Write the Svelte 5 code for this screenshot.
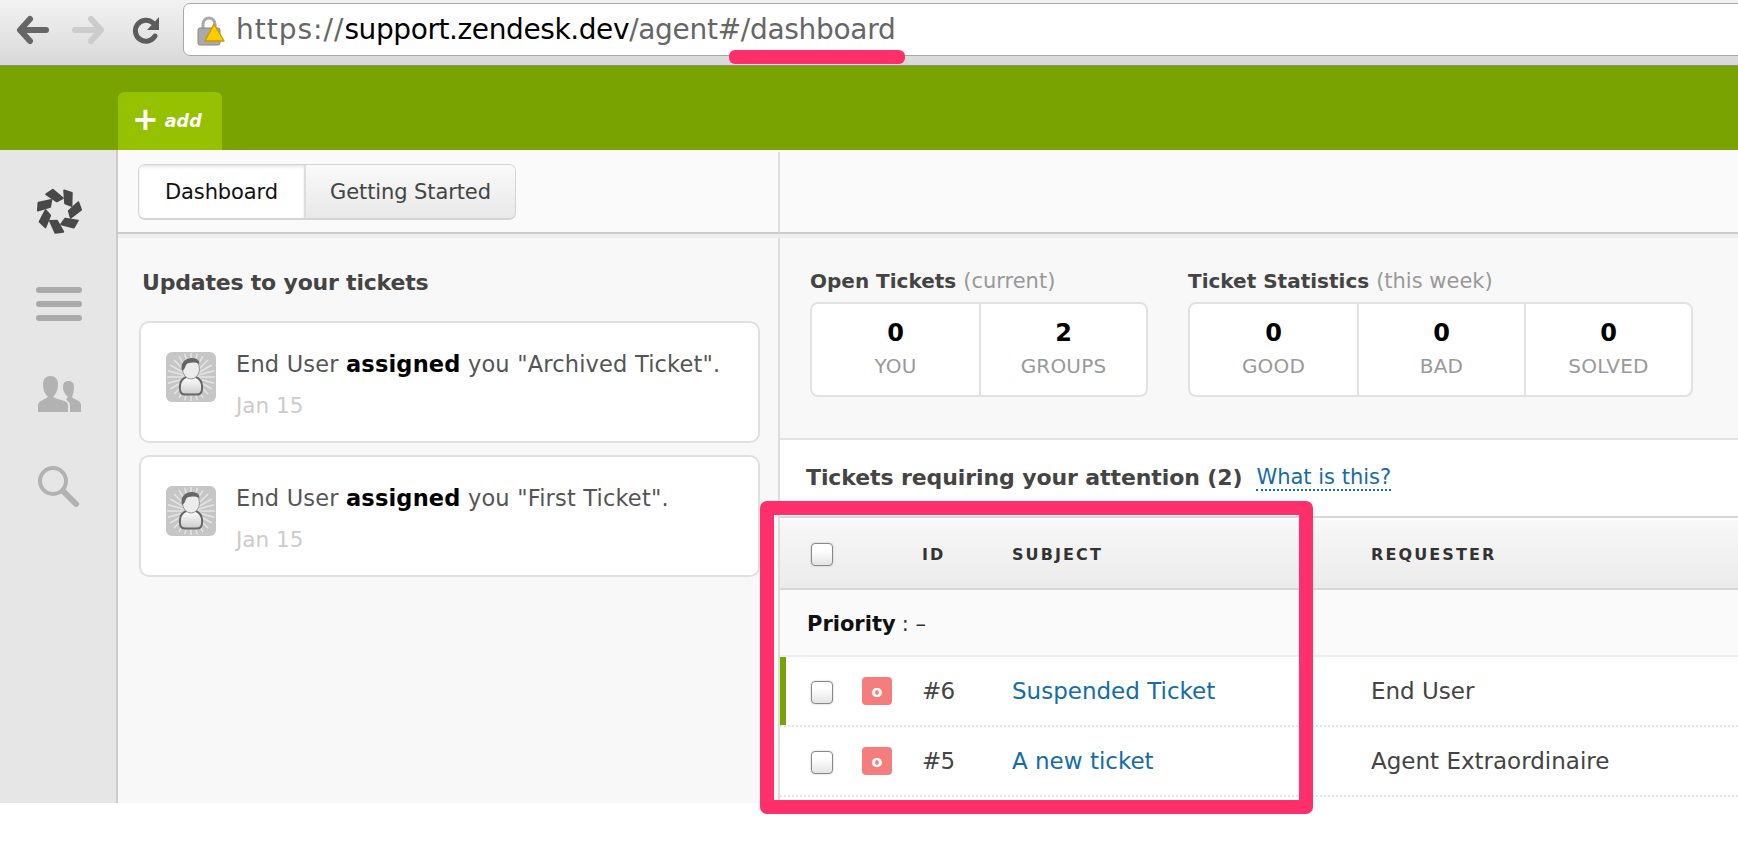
<script lang="ts">
  const updates = [
    { title: '"Archived Ticket".', date: 'Jan 15' },
    { title: '"First Ticket".', date: 'Jan 15' },
  ];
  const openStats = [
    { value: 0, label: 'YOU' },
    { value: 2, label: 'GROUPS' },
  ];
  const weekStats = [
    { value: 0, label: 'GOOD' },
    { value: 0, label: 'BAD' },
    { value: 0, label: 'SOLVED' },
  ];
  const tickets = [
    { id: '#6', subject: 'Suspended Ticket', requester: 'End User', current: true },
    { id: '#5', subject: 'A new ticket', requester: 'Agent Extraordinaire', current: false },
  ];
  const petals = [0, 1, 2, 3, 4, 5, 6];
  const rays = Array.from({ length: 24 }, (_, i) => (i * 360) / 24);
</script>

<div class="page">
  <header class="chrome">
    <svg class="nav" width="34" height="30" viewBox="0 0 34 30" aria-label="Back">
      <path d="M14 4 L4 15 L14 26 M5 15 H30" fill="none" stroke="#666" stroke-width="6" stroke-linecap="round" stroke-linejoin="round" />
    </svg>
    <svg class="nav forward" width="34" height="30" viewBox="0 0 34 30" aria-label="Forward">
      <path d="M20 4 L30 15 L20 26 M29 15 H4" fill="none" stroke="#ccc" stroke-width="6" stroke-linecap="round" stroke-linejoin="round" />
    </svg>
    <svg class="nav reload" width="30" height="30" viewBox="0 0 30 30" aria-label="Reload">
      <path d="M22 8 A10.5 10.5 0 1 0 24 21" fill="none" stroke="#5c5c5c" stroke-width="5" stroke-linecap="round" />
      <path d="M28 2 V15 H16 Z" fill="#5c5c5c" />
    </svg>
    <div class="address">
      <svg class="lock" width="30" height="32" viewBox="0 0 30 32">
        <path d="M6 14 V9 A6 6 0 0 1 18 9 V14" fill="none" stroke="#aaa" stroke-width="3" />
        <rect x="1" y="13" width="22" height="17" rx="2" fill="#a9a9a9" stroke="#888" />
        <path d="M17 9 L27 26 H8 Z" fill="#fc0" stroke="#c89a00" stroke-width="1.4" stroke-linejoin="round" />
      </svg>
      <span class="url"><span class="dim scheme">https://</span><span class="host">support.zendesk.dev</span><span class="dim path">/agent#/dashboard</span></span>
    </div>
  </header>

  <div class="greenbar">
    <div class="add-tab"><span class="plus">+</span> <em>add</em></div>
  </div>

  <div class="workspace">
    <aside class="rail">
      <svg width="46" height="46" viewBox="-20.5 -20.5 41 41" aria-label="Home">
        {#each petals as i}
          <path
            transform={`rotate(${(i * 360) / 7})`}
            d="M-11.5 -15 L-5.5 -19 L3.5 -11.5 L-2 -8.5 Z"
            fill="#484848"
            stroke="#484848"
            stroke-width="1.6"
            stroke-linejoin="round"
          />
        {/each}
      </svg>
      <svg width="46" height="46" viewBox="0 0 46 46" aria-label="Views">
        <rect y="7" width="46" height="6" rx="3" fill="#aaa" />
        <rect y="21" width="46" height="6" rx="3" fill="#aaa" />
        <rect y="35" width="46" height="6" rx="3" fill="#aaa" />
      </svg>
      <svg width="46" height="46" viewBox="0 0 46 46" aria-label="Customers">
        <path d="M2 40 V33 C2 29 8 28 12 25 C9 22 7 18 7 12 C7 7 10 4 14.5 4 C19 4 22 7 22 12 C22 18 20 22 17 25 C21 28 32 28 32 33 V40 Z" fill="#b2b2b2" />
        <path d="M34 40 V33 C34 30 31 29 30 27 L32 25 C28 21 27 18 27 15 C27 11 29 9 32.5 9 C36 9 38 11 38 15 C38 19 37 22 36 25 C38 28 45 28 45 33 V40 Z" fill="#b2b2b2" />
      </svg>
      <svg width="46" height="46" viewBox="0 0 46 46" aria-label="Search">
        <circle cx="17" cy="17" r="13" fill="none" stroke="#b2b2b2" stroke-width="4" />
        <path d="M27 27 L40 40" stroke="#b2b2b2" stroke-width="6" stroke-linecap="round" />
      </svg>
    </aside>

    <main class="content">
      <div class="topbar">
        <div class="tabs-cell">
          <div class="tabs">
            <div class="tab active">Dashboard</div>
            <div class="tab">Getting Started</div>
          </div>
        </div>
        <div class="top-rest"></div>
      </div>

      <div class="columns">
        <section class="updates">
          <h2>Updates to your tickets</h2>
          {#each updates as u}
            <article class="card">
              <svg class="avatar" width="50" height="50" viewBox="0 0 50 50">
                <defs>
                  <linearGradient id="avatar-body" x1="0" y1="0" x2="0" y2="1">
                    <stop offset="0" stop-color="#fff" />
                    <stop offset="1" stop-color="#ccc" />
                  </linearGradient>
                </defs>
                <rect width="50" height="50" rx="6" fill="#c6c6c6" />
                {#each rays as r}
                  <path transform={`rotate(${r} 25 25)`} d="M25 25 V1" stroke="#e4e4e4" stroke-width="1.5" />
                {/each}
                <path d="M19 42.500 C14 42.500 13.500 38 14 33 C14.500 29 17 26.500 20 25 H30 C33 26.500 35.500 29 36 33 C36.500 38 36 42.500 31 42.500 Z" fill="url(#avatar-body)" stroke="#666" stroke-width="2" />
                <ellipse cx="25" cy="17" rx="8.500" ry="10" fill="#ececec" stroke="#999" />
                <path d="M16 19 C14 11 19 6 26 6 C31 6 34 9 33.500 12 C29 10 22 10 20 13 C19 16 18 18 16 19 Z" fill="#666" />
              </svg>
              <div class="card-text">
                <p>End User <strong>assigned</strong> you {u.title}</p>
                <time>{u.date}</time>
              </div>
            </article>
          {/each}
        </section>

        <section class="main-col">
          <div class="stats">
            <div class="stat-group">
              <h3>Open Tickets <small>(current)</small></h3>
              <div class="stat-box">
                {#each openStats as s}
                  <div class="stat"><b>{s.value}</b><span>{s.label}</span></div>
                {/each}
              </div>
            </div>
            <div class="stat-group">
              <h3>Ticket Statistics <small>(this week)</small></h3>
              <div class="stat-box">
                {#each weekStats as s}
                  <div class="stat"><b>{s.value}</b><span>{s.label}</span></div>
                {/each}
              </div>
            </div>
          </div>

          <div class="tickets-head">
            <h2>Tickets requiring your attention (2)</h2>
            <span class="what">What is this?</span>
          </div>

          <div class="table">
            <div class="row head">
              <span class="check"></span>
              <span></span>
              <span>ID</span>
              <span>SUBJECT</span>
              <span>REQUESTER</span>
            </div>
            <div class="group"><strong>Priority</strong> : –</div>
            {#each tickets as t}
              <div class="row ticket" class:current={t.current}>
                <span class="check"></span>
                <span class="badge">o</span>
                <span class="num">{t.id}</span>
                <span class="link">{t.subject}</span>
                <span>{t.requester}</span>
              </div>
            {/each}
          </div>
        </section>
      </div>
    </main>
  </div>

  <!-- annotation marks drawn over the screenshot -->
  <div class="mark-line"></div>
  <div class="mark-box"></div>
</div>

<style>
  :global(body) {
    margin: 0;
    background: #fff;
  }
  .page {
    position: relative;
    width: 1738px;
    height: 856px;
    overflow: hidden;
    font-family: 'DejaVu Sans', sans-serif;
    color: #555;
  }

  .chrome {
    box-sizing: border-box;
    height: 66px;
    display: flex;
    align-items: flex-start;
    padding: 3px 0 0 16px;
    background: linear-gradient(#f2f2f2, #d9d9d9);
    border-bottom: 1px solid #8a8a8a;
  }
  .nav { margin-top: 12px; }
  .forward { margin-left: 21px; }
  .reload { margin-left: 26px; }
  .address {
    box-sizing: border-box;
    flex: 1;
    height: 53px;
    margin: 0 -10px 0 22px;
    padding-left: 14px;
    display: flex;
    align-items: center;
    gap: 9px;
    background: #fff;
    border: 1px solid #a8a8a8;
    border-radius: 7px;
  }
  .lock { flex: none; margin-top: 2px; margin-left: -1px; }
  .url {
    font-size: 28px;
    color: #000;
  }
  .dim { color: #666; }
  .scheme { letter-spacing: 1px; }
  .host { letter-spacing: -0.4px; }
  .path { letter-spacing: -0.3px; }

  .greenbar {
    height: 84px;
    box-sizing: border-box;
    background: #78a300;
    padding: 26px 0 0 118px;
  }
  .add-tab {
    box-sizing: border-box;
    width: 104px;
    height: 58px;
    background: #95c100;
    border-radius: 6px 6px 0 0;
    color: #fff;
    display: flex;
    align-items: center;
    gap: 6px;
    padding-left: 14px;
    font-size: 17.5px;
    font-weight: 700;
  }
  .plus { font-size: 32px; font-weight: 700; line-height: 1; margin-top: -4px; }

  .workspace {
    display: flex;
    height: 653px;
  }
  .rail {
    box-sizing: border-box;
    width: 118px;
    flex: none;
    background: #e6e6e6;
    border-right: 2px solid #ccc;
    padding: 38px 0 0 36px;
    display: flex;
    flex-direction: column;
    gap: 46px;
  }
  .content {
    flex: 1;
    min-width: 0;
    display: flex;
    flex-direction: column;
  }

  .topbar {
    height: 84px;
    flex: none;
    box-sizing: border-box;
    display: flex;
    background: #fafafa;
    border-bottom: 2px solid #ccc;
  }
  .tabs-cell {
    box-sizing: border-box;
    width: 662px;
    padding: 14px 0 0 20px;
    border-right: 2px solid #ddd;
    margin-top: 2px;
  }
  .top-rest { flex: 1; }
  .tabs {
    display: inline-flex;
    height: 56px;
    border: 1px solid #d4d4d4;
    border-bottom-width: 2px;
    border-radius: 7px;
    overflow: hidden;
    box-sizing: border-box;
    margin-top: -2px;
  }
  .tab {
    display: flex;
    align-items: center;
    justify-content: center;
    box-sizing: border-box;
    width: 209px;
    font-size: 21px;
    letter-spacing: -0.1px;
    color: #444;
    background: linear-gradient(#fafafa, #e8e8e8);
  }
  .tab.active {
    width: 167px;
    background: #fff;
    color: #111;
    border-right: 2px solid #ddd;
    box-shadow: inset 0 2px 3px #e6e6e6;
  }

  .columns {
    flex: 1;
    display: flex;
    min-height: 0;
    border-top: 4px solid #eee;
  }
  .updates {
    box-sizing: border-box;
    width: 662px;
    flex: none;
    background: #f8f8f8;
    padding: 0 18px 0 21px;
    border-right: 2px solid #ddd;
  }
  .updates h2 {
    margin: 32px 0 25px 3px;
    font-size: 22px;
    line-height: 26px;
    letter-spacing: -0.2px;
    color: #444;
  }
  .card {
    box-sizing: border-box;
    height: 122px;
    margin-bottom: 12px;
    display: flex;
    gap: 20px;
    padding: 29px 0 0 25px;
    background: #fff;
    border: 2px solid #e0e0e0;
    border-radius: 10px;
  }
  .avatar { flex: none; }
  .card-text p {
    margin: 0;
    font-size: 22.5px;
    line-height: 24px;
    letter-spacing: 0.18px;
    color: #555;
  }
  .card-text strong { color: #000; }
  .card-text time {
    display: block;
    margin-top: 17px;
    font-size: 21.5px;
    color: #ccc;
  }

  .main-col {
    flex: 1;
    min-width: 0;
    display: flex;
    flex-direction: column;
  }
  .stats {
    box-sizing: border-box;
    height: 202px;
    flex: none;
    display: flex;
    gap: 40px;
    padding: 29px 0 0 30px;
    background: #f8f8f8;
    border-bottom: 2px solid #e4e4e4;
  }
  .stat-group h3 {
    margin: 0 0 7px;
    font-size: 20px;
    line-height: 28px;
    color: #444;
  }
  .stat-group small {
    font-size: 21px;
    font-weight: 400;
    color: #999;
  }
  .stat-box {
    display: flex;
    height: 95px;
    box-sizing: border-box;
    background: #fff;
    border: 2px solid #e2e2e2;
    border-radius: 8px;
  }
  .stat {
    box-sizing: border-box;
    width: 167px;
    display: flex;
    flex-direction: column;
    align-items: center;
    padding-top: 15px;
    border-left: 2px solid #e2e2e2;
  }
  .stat:first-child { border-left: 0; }
  .stat b {
    font-size: 24px;
    line-height: 28px;
    color: #000;
  }
  .stat span {
    margin-top: 7px;
    font-size: 20px;
    line-height: 24px;
    letter-spacing: 0.2px;
    color: #999;
  }

  .tickets-head {
    height: 76px;
    flex: none;
    box-sizing: border-box;
    display: flex;
    align-items: flex-start;
    gap: 14px;
    padding: 25px 0 0 26px;
  }
  .tickets-head h2 {
    margin: 0;
    font-size: 22px;
    line-height: 26px;
    letter-spacing: -0.1px;
    color: #444;
  }
  .what {
    font-size: 21px;
    line-height: 24px;
    color: #146ca8;
    border-bottom: 2px dotted #146ca8;
  }

  .table {
    border-top: 2px solid #d8d8d8;
  }
  .row {
    display: grid;
    grid-template-columns: 82px 60px 90px 359px 1fr;
    align-items: center;
    box-sizing: border-box;
  }
  .head {
    height: 70px;
    margin-top: 2px;
    background: linear-gradient(#f8f8f8, #ebebeb);
    border-bottom: 2px solid #d6d6d6;
    font-size: 16px;
    font-weight: 700;
    letter-spacing: 2.1px;
    color: #333;
  }
  .group {
    box-sizing: border-box;
    height: 67px;
    display: flex;
    align-items: center;
    gap: 6px;
    padding: 2px 0 0 27px;
    background: #fafafa;
    border-bottom: 2px solid #eee;
    font-size: 21px;
    color: #333;
  }
  .group strong { color: #111; }
  .ticket {
    height: 70px;
    border-bottom: 2px dotted #e4e4e4;
    font-size: 23px;
    color: #444;
  }
  .ticket.current {
    box-shadow: inset 6px 0 0 #78a300;
  }
  .ticket .check { margin-top: 2px; }
  .num { letter-spacing: -0.8px; }
  .check {
    box-sizing: border-box;
    width: 22px;
    height: 23px;
    margin-left: 31px;
    background: linear-gradient(#fff 30%, #e4e4e4);
    border: 1px solid #888;
    border-radius: 4px;
    box-shadow: 0 0 2px #bbb;
  }
  .badge {
    width: 30px;
    height: 28px;
    display: flex;
    align-items: center;
    justify-content: center;
    background: #f47e7e;
    border-radius: 4px;
    color: #fff;
    font-size: 16px;
    font-weight: 700;
  }
  .link { color: #146ca8; }

  .mark-line {
    position: absolute;
    left: 729px;
    top: 50px;
    width: 176px;
    height: 14px;
    background: #ff2f6c;
    border-radius: 6px;
  }
  .mark-box {
    position: absolute;
    left: 760px;
    top: 501px;
    width: 553px;
    height: 313px;
    box-sizing: border-box;
    border: 14px solid #ff2f6c;
    border-radius: 7px;
  }
</style>
